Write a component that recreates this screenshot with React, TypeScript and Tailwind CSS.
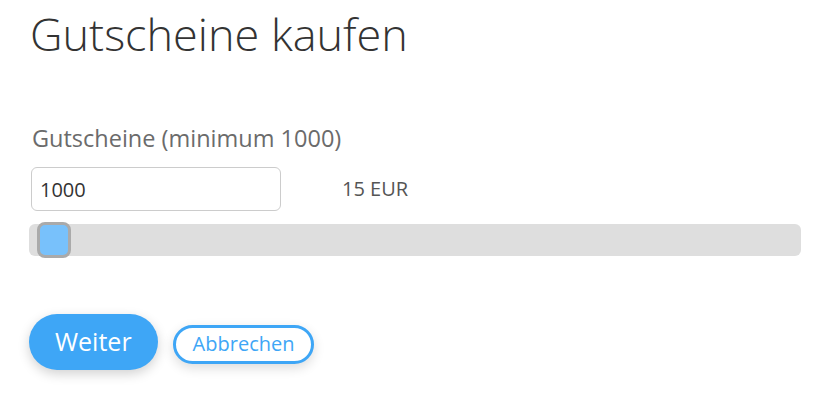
import { useState } from 'react';

const App = () => {
  const [count, setCount] = useState(1000);

  return (
    <div className="min-h-screen bg-white pl-[30px] pr-[26px] pt-[3px] font-['Open_Sans',sans-serif]">
      <h1 className="text-[45px] font-light leading-[62px] text-[#333]">Gutscheine kaufen</h1>

      <div className="mt-[58px]">
        <label className="block pl-[2px] text-[23.5px] leading-[31px] text-[#6b6b6b]">Gutscheine (minimum 1000)</label>
        <div className="mt-[13px] flex items-center pl-[1px]">
          <input
            type="text"
            value={count}
            onChange={(e) => setCount(Number(e.target.value) || 0)}
            className="h-[44px] w-[250px] rounded-[6px] border border-[#ccc] px-[8px] text-[20px] text-[#333] outline-none"
          />
          <span className="ml-[61px] text-[20px] text-[#555]">15 EUR</span>
        </div>

        {/* slider */}
        <div className="mt-[13px] flex h-[32px] w-[772px] -ml-[1px] items-center rounded-[6px] bg-[#dedede] pl-[8px]">
          <div className="h-[36px] w-[34px] rounded-[8px] border-[3px] border-[#aaa] bg-[#78c1fb]" />
        </div>
      </div>

      <div className="mt-[58px] flex items-center gap-[15px] -ml-[1px]">
        <button className="h-[56px] rounded-full bg-[#3ea6f6] px-[26px] text-[25px] text-white shadow-[0_4px_12px_rgba(0,0,0,0.18)]">
          Weiter
        </button>
        <button className="mt-[4px] h-[39px] rounded-full border-[3px] border-[#3ea6f6] bg-white px-[17px] text-[20px] text-[#3ea6f6] shadow-[0_4px_12px_rgba(0,0,0,0.14)]">
          Abbrechen
        </button>
      </div>
    </div>
  );
};

export default App;
